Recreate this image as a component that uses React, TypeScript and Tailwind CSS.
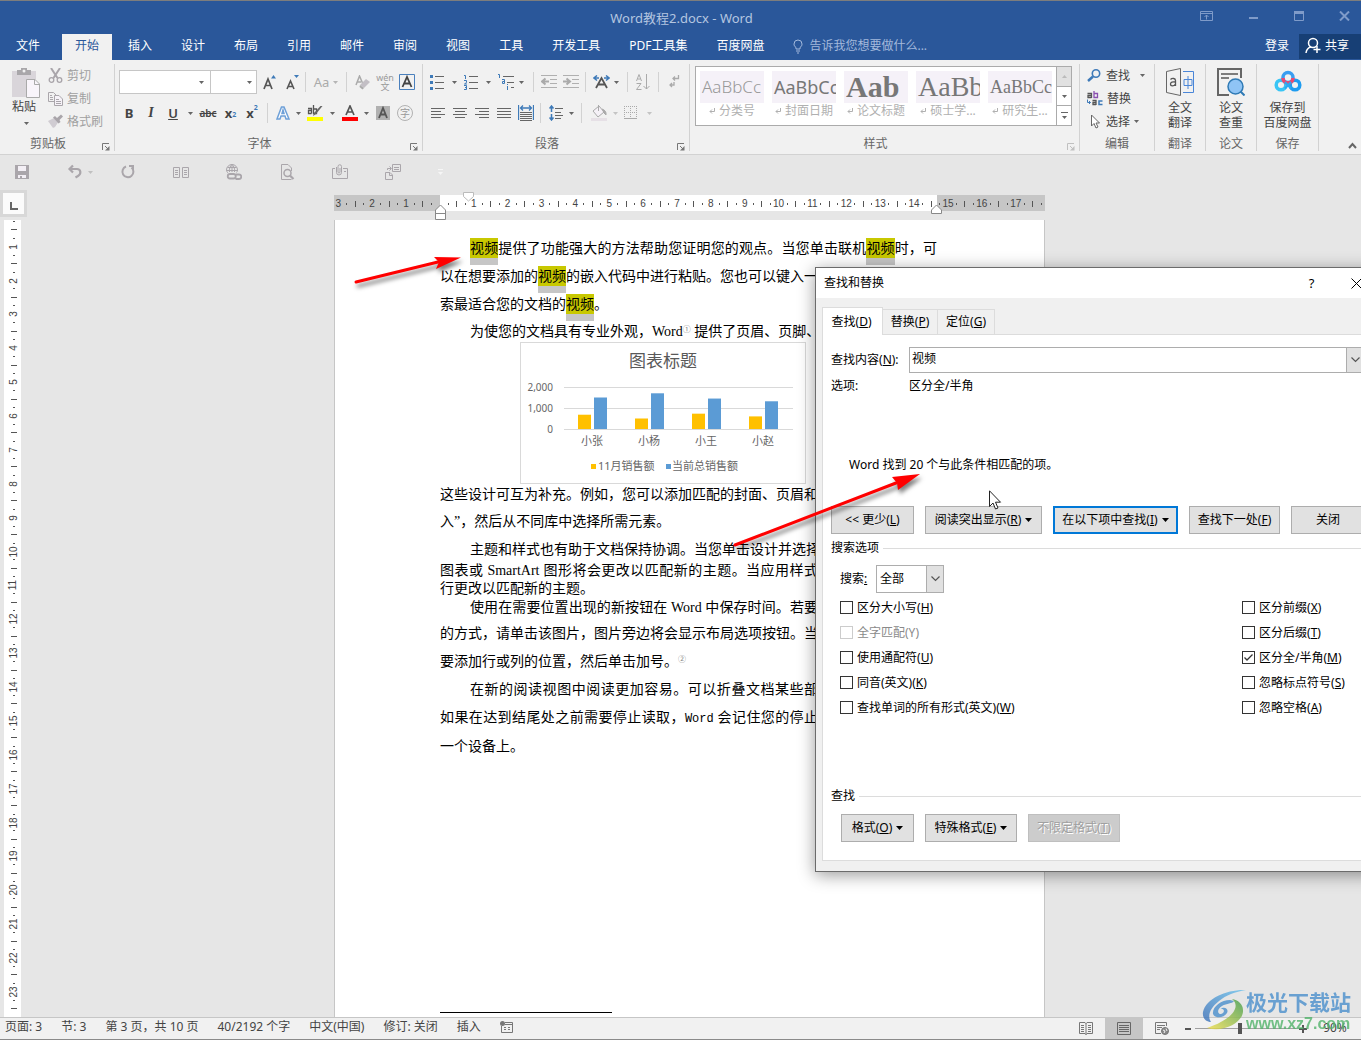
import type { ReactNode } from "react";

const UI_FONT = "font-['Noto_Sans','Noto_Sans_CJK_SC',sans-serif]";
const DOC_FONT = "font-['Liberation_Serif','Noto_Sans_CJK_SC',serif]";

interface ChildProps {
  children: ReactNode;
}

/* ---------- small building blocks ---------- */

function Svg({ w, h, children }: { w: number; h: number; children: ReactNode }) {
  return (
    <svg width={w} height={h} viewBox={`0 0 ${w} ${h}`} fill="none" className="block shrink-0">
      {children}
    </svg>
  );
}

function Caret({ color = "#666" }: { color?: string }) {
  return (
    <Svg w={5} h={3}>
      <path d="M0 0H5L2.500 3Z" fill={color} />
    </Svg>
  );
}

function Tool({ label, className, children }: { label: string; className: string; children: ReactNode }) {
  return (
    <button aria-label={label} className={`flex h-6 shrink-0 items-center justify-center ${className}`}>
      {children}
    </button>
  );
}

function Sep({ className = "" }: { className?: string }) {
  return <div className={`h-5 w-px shrink-0 bg-[#d2d2d2] ${className}`} />;
}

function Launcher({ color = "#777" }: { color?: string }) {
  return (
    <button aria-label="更多选项" className="absolute right-1 bottom-0">
      <Svg w={8} h={8}>
        <path d="M.5 7V.5H7M3 3L6 6" stroke={color} />
        <path d="M7.500 3V7.500H3Z" fill={color} />
      </Svg>
    </button>
  );
}

interface GroupProps {
  name: string;
  className: string;
  launcher?: string;
  children: ReactNode;
}

function Group({ name, className, launcher, children }: GroupProps) {
  return (
    <section className={`relative flex h-[87px] shrink-0 flex-col border-r border-[#d2d2d2] ${className}`}>
      <div className="flex-1">{children}</div>
      <div className={`text-center leading-[14px] text-[#666] ${launcher ? "pr-[18px]" : ""}`}>{name}</div>
      {launcher && <Launcher color={launcher} />}
    </section>
  );
}

/* ---------- title bar and tabs ---------- */

function TitleBar() {
  return (
    <header className="flex h-[34px] items-center border-t border-[#7d7d7d] bg-[#2a579a] pl-3">
      <div className="flex-1" />
      <h1 className="text-[13px] text-[#b4c6e0]">Word教程2.docx - Word</h1>
      <div className="flex flex-1 items-center justify-end gap-[33px] pr-2.5 pb-1">
        <button aria-label="功能区显示选项">
          <Svg w={13} h={10}>
            <path d="M.5 .5H12.500V9.500H.5ZM.5 2.500H12.500M6.500 8.500V4M4.500 6L6.500 4L8.500 6" stroke="#7f9bc9" />
          </Svg>
        </button>
        <button aria-label="最小化">
          <Svg w={13} h={10}>
            <path d="M3 7H12" stroke="#7f9bc9" strokeWidth="2" />
          </Svg>
        </button>
        <button aria-label="最大化">
          <Svg w={13} h={10}>
            <path d="M2.500 1V9.500H11.500V1" stroke="#7f9bc9" />
            <path d="M2 0H12V3H2Z" fill="#7f9bc9" />
          </Svg>
        </button>
        <button aria-label="关闭窗口">
          <Svg w={13} h={10}>
            <path d="M2 .5L11 9.500M11 .5L2 9.500" stroke="#7f9bc9" strokeWidth="2" />
          </Svg>
        </button>
      </div>
    </header>
  );
}

const TABS = ["开始", "插入", "设计", "布局", "引用", "邮件", "审阅", "视图", "工具", "开发工具", "PDF工具集", "百度网盘"];

function TabBar() {
  return (
    <nav className="flex h-[26px] items-stretch bg-[#2a579a] text-white">
      <button className="w-[62px] pr-1.5 pb-0.5">文件</button>
      <div className="flex gap-[3px]">
        {TABS.map((tab, i) => (
          <button key={tab} className={`px-[13px] pb-0.5 ${i === 0 ? "bg-[#f1f1f1] text-[#2a579a]" : ""}`}>
            {tab}
          </button>
        ))}
      </div>
      <button className="ml-4 flex items-center gap-1.5 pb-0.5 text-[#a3b9dc]">
        <Svg w={10} h={15}>
          <path d="M3 10V8.500C1.500 7.500 1 6.300 1 5A4 4 0 0 1 9 5C9 6.300 8.500 7.500 7 8.500V10ZM3 12H7M4 14H6" stroke="#a3b9dc" />
        </Svg>
        告诉我您想要做什么...
      </button>
      <button className="ml-auto px-2.5 pb-0.5">登录</button>
      <button className="mb-px flex w-[62px] items-center gap-1 bg-[#173f75] pb-0.5 pl-1.5">
        <Svg w={16} h={17}>
          <circle cx="8" cy="6" r="4.500" stroke="#fff" strokeWidth="1.500" />
          <path d="M1 16C1.500 12.500 3.500 10.500 6 10M8.500 12.500H15.500M12 9V16" stroke="#fff" strokeWidth="1.500" />
        </Svg>
        共享
      </button>
    </nav>
  );
}

/* ---------- ribbon ---------- */

function ClipboardGroup() {
  const item = "flex h-[23px] items-center gap-1 whitespace-nowrap text-[#a0a0a0]";
  return (
    <Group name="剪贴板" className="w-[115px]" launcher="#777">
      <div className="flex">
        <button className="flex w-[48px] shrink-0 flex-col items-center pt-1 text-[#444]">
          <span className="pl-1">
            <Svg w={30} h={30}>
              <path d="M1 3H25V29H1Z" fill="#d9d5da" />
              <path d="M6 2H10V0H16V2H20V7H6Z" fill="#a9a7aa" />
              <circle cx="13" cy="3" r="1.500" fill="#f1f1f1" />
              <path d="M15.500 11.500H24L28.500 16V29.500H15.500Z" fill="#f9f5fb" stroke="#aaa" />
              <path d="M23.500 11.500V16.500H28.500" stroke="#aaa" />
            </Svg>
          </span>
          <span className="leading-[18px]">粘贴</span>
          <span className="pt-1.5 pl-1">
            <Caret />
          </span>
        </button>
        <div>
          <button className={item}>
            <Svg w={15} h={15}>
              <path d="M3 0L9.500 10M12 0L5.500 10" stroke="#a9a5aa" strokeWidth="2" />
              <circle cx="3.500" cy="12" r="2.300" stroke="#a9a5aa" strokeWidth="1.300" />
              <circle cx="11.500" cy="12" r="2.300" stroke="#a9a5aa" strokeWidth="1.300" />
            </Svg>
            剪切
          </button>
          <button className={item}>
            <Svg w={15} h={15}>
              <path d="M.5 1.500H5.500L8.500 4.500V10.500H.5ZM2 4.500H4M2 6.500H5M2 8.500H5" stroke="#aaa6ab" />
              <path d="M6.500 4.500H11L14.500 8V14.500H6.500Z" fill="#f6f2f8" stroke="#aaa6ab" />
              <path d="M8 8.500H11M8 10.500H13M8 12.500H13" stroke="#aaa6ab" />
            </Svg>
            复制
          </button>
          <button className={item}>
            <Svg w={15} h={15}>
              <path d="M0 7L6 4L10 8.500L7 13L5 14Z" fill="#d0ccd2" />
              <path d="M5 3.500L7 2L9 4L13 .5L15 2.500L11.500 6L12.500 8L10.500 9.500Z" fill="#a9a5aa" />
            </Svg>
            格式刷
          </button>
        </div>
      </div>
    </Group>
  );
}

function FontGroup() {
  return (
    <Group name="字体" className="w-[308px]" launcher="#777">
      <div className="flex h-[36px] items-center pl-1">
        <div className="flex h-6 w-[92px] items-center border border-[#c6c6c6] bg-white pr-1.5">
          <input aria-label="字体名称" className="w-full min-w-0 flex-1 outline-none" />
          <Caret />
        </div>
        <div className="-ml-px flex h-6 w-[47px] items-center border border-[#c6c6c6] bg-white pr-1">
          <input aria-label="字号" className="w-full min-w-0 flex-1 outline-none" />
          <Caret />
        </div>
        <Tool label="增大字号" className="w-[24px]">
          <Svg w={13} h={15}>
            <path d="M1 14L5 4L9 14M2.500 10.500H7.500" stroke="#555" strokeWidth="1.700" />
            <path d="M8 3.500L10.500 0L13 3.500Z" fill="#3e7ab8" />
          </Svg>
        </Tool>
        <Tool label="减小字号" className="w-[22px]">
          <Svg w={13} h={15}>
            <path d="M1 14L4.500 6L8 14M2.500 11.500H6.500" stroke="#555" strokeWidth="1.600" />
            <path d="M8 0H13L10.500 3Z" fill="#3e7ab8" />
          </Svg>
        </Tool>
        <Sep className="ml-[2px]" />
        <Tool label="更改大小写" className="w-[40px] gap-1">
          <span className="text-[13px] text-[#aaa]">Aa</span>
          <Caret color="#b5b5b5" />
        </Tool>
        <Sep />
        <Tool label="清除格式" className="ml-1 w-[22px]">
          <Svg w={15} h={15}>
            <path d="M1 10L4.500 1L7.500 8M2 7H6" stroke="#aaa" strokeWidth="1.500" />
            <path d="M5 10L11 4L15 7L9 13Z" fill="#c3bfc5" />
            <path d="M5 10L9 13L7.500 14.500L4.500 12Z" fill="#aaa" />
          </Svg>
        </Tool>
        <Tool label="拼音指南" className="w-[24px] flex-col text-[#999]">
          <span className="text-[9px] leading-[9px]">wén</span>
          <span className="text-[9px] leading-[9px]">文</span>
        </Tool>
        <Tool label="字符边框" className="w-[20px]">
          <Svg w={16} h={16}>
            <path d="M.5 .5H15.500V15.500H.5Z" stroke="#4a80bd" />
            <path d="M3.500 13L8 3L12.500 13M5 9.500H11" stroke="#444" strokeWidth="1.800" />
          </Svg>
        </Tool>
      </div>
      <div className="flex h-[26px] items-center pl-[3px] text-[#444]">
        <Tool label="加粗" className="w-[22px] text-[13px] font-bold">
          B
        </Tool>
        <Tool label="倾斜" className="w-[22px] text-[14px] font-bold italic">
          <span className="font-['Liberation_Serif']">I</span>
        </Tool>
        <Tool label="下划线" className="w-[22px] text-[13px] font-semibold">
          <span className="underline">U</span>
        </Tool>
        <Tool label="下划线样式" className="w-[12px]">
          <Caret />
        </Tool>
        <Tool label="删除线" className="w-[24px] text-[10px] font-semibold">
          <span className="line-through">abc</span>
        </Tool>
        <Tool label="下标" className="w-[21px] text-[13px] font-bold">
          x<sub className="text-[7px] text-[#3e7ab8]">2</sub>
        </Tool>
        <Tool label="上标" className="w-[22px] text-[13px] font-bold">
          x<sup className="pb-1 text-[7px] text-[#3e7ab8]">2</sup>
        </Tool>
        <Sep className="ml-1" />
        <Tool label="文本效果" className="ml-1 w-[32px] gap-[6px]">
          <Svg w={14} h={14}>
            <path d="M1 13L5.500 1H8L13 13H10L9 10H5L4 13ZM6 7.500H8L7 4Z" fill="#fff" stroke="#6ea0d8" strokeWidth="1.500" />
          </Svg>
          <Caret />
        </Tool>
        <Tool label="突出显示颜色" className="w-[34px] gap-[6px]">
          <Svg w={17} h={16}>
            <path d="M1 3.500H4.500V8.500M4.500 5.500H1.500V8.500H4.500M6.500 0V8.500H9.500V4H6.500" stroke="#555" strokeWidth="1.300" />
            <path d="M15.500 1L9 9L6 11L7 8L13.500 1Z" fill="#666" />
            <path d="M0 12H16V16H0Z" fill="#ff0" />
          </Svg>
          <Caret />
        </Tool>
        <Tool label="字体颜色" className="w-[34px] gap-[6px]">
          <Svg w={16} h={16}>
            <path d="M4 10L8 1L12 10M5.500 7H10.500" stroke="#555" strokeWidth="1.700" />
            <path d="M0 12H16V16H0Z" fill="red" />
          </Svg>
          <Caret />
        </Tool>
        <Tool label="字符底纹" className="w-[22px]">
          <Svg w={14} h={14}>
            <path d="M0 0H14V14H0Z" fill="#b1b1b1" />
            <path d="M3 12L7 2L11 12M4.500 8.500H9.500" stroke="#555" strokeWidth="1.800" />
          </Svg>
        </Tool>
        <Tool label="带圈字符" className="w-[22px]">
          <span className="flex size-4 items-center justify-center rounded-full border border-[#b1b1b1] text-[10px] leading-none text-[#999]">
            字
          </span>
        </Tool>
      </div>
    </Group>
  );
}

function ParagraphGroup() {
  return (
    <Group name="段落" className="w-[267px]" launcher="#777">
      <div className="flex h-[36px] items-center pl-[7px]">
        <Tool label="项目符号" className="w-[34px] justify-start gap-2">
          <Svg w={14} h={15}>
            <path d="M5 1.500H14M5 7.500H14M5 13.500H14" stroke="#666" />
            <path d="M0 0H3V3H0ZM0 6H3V9H0ZM0 12H3V15H0Z" fill="#3e7ab8" />
          </Svg>
          <Caret />
        </Tool>
        <Tool label="编号" className="w-[34px] justify-start gap-2">
          <Svg w={14} h={16}>
            <path d="M5 2.500H14M5 8.500H14M5 14.500H14" stroke="#666" />
            <path d="M0 1.500H1.500V5M0 6.500H2.500V8.500L.5 10H3M0 11.500H2.500V15.500H0M1 13.500H2.500" stroke="#3e7ab8" />
          </Svg>
          <Caret />
        </Tool>
        <Tool label="多级列表" className="w-[32px] justify-start gap-[4px]">
          <Svg w={17} h={16}>
            <path d="M5 2.500H16M9 8.500H16M13 13.500H16" stroke="#666" />
            <path d="M0 .5H1.500V4M4 5.500H6.500V9.500H4.500V7.500H6.500M9.500 10V11M9.500 12V16" stroke="#3e7ab8" />
          </Svg>
          <Caret />
        </Tool>
        <Sep className="ml-[3px]" />
        <Tool label="减少缩进量" className="ml-1 w-[22px]">
          <Svg w={16} h={14}>
            <path d="M0 .5H16M9 4.500H16M9 8.500H16M0 12.500H16" stroke="#b0b0b0" />
            <path d="M8 6.500H2M4.500 3.500L1 6.500L4.500 9.500" stroke="#aaa" strokeWidth="2" />
          </Svg>
        </Tool>
        <Tool label="增加缩进量" className="w-[22px]">
          <Svg w={16} h={14}>
            <path d="M0 .5H16M9 4.500H16M9 8.500H16M0 12.500H16" stroke="#b0b0b0" />
            <path d="M0 6.500H6M3.500 3.500L7 6.500L3.500 9.500" stroke="#aaa" strokeWidth="2" />
          </Svg>
        </Tool>
        <Sep className="ml-[3px]" />
        <Tool label="中文版式" className="ml-[3px] w-[34px] gap-1">
          <Svg w={17} h={14}>
            <path d="M3 13L8.500 3L14 13M5 9.500H12" stroke="#555" strokeWidth="1.800" />
            <path d="M6 3H1.500M4 .5L1 3L4 5.500M11 3H15.500M13 .5L16 3L13 5.500" stroke="#3e7ab8" strokeWidth="1.500" />
          </Svg>
          <Caret />
        </Tool>
        <Sep className="ml-1" />
        <Tool label="排序" className="w-[30px]">
          <Svg w={14} h={16}>
            <path d="M.5 7L3 .5L5.500 7M1.500 5H4.500M.5 9.500H5L.5 15.500H5.500M10.500 0V15M7.500 12L10.500 15L13.500 12" stroke="#aaa" />
          </Svg>
        </Tool>
        <Sep />
        <Tool label="显示编辑标记" className="w-[30px]">
          <Svg w={11} h={14}>
            <path d="M9.500 0V3.500H4M6 1.500L4 3.500L6 5.500M5 7V10H1M3 8L1 10L3 12" stroke="#aaa" strokeWidth="1.300" />
          </Svg>
        </Tool>
      </div>
      <div className="flex h-[26px] items-center pl-1">
        {[
          ["左对齐", "M0 .5H14M0 3.500H10M0 6.500H14M0 9.500H10"],
          ["居中", "M0 .5H14M2 3.500H12M0 6.500H14M2 9.500H12"],
          ["右对齐", "M0 .5H14M4 3.500H14M0 6.500H14M4 9.500H14"],
          ["两端对齐", "M0 .5H14M0 3.500H14M0 6.500H14M0 9.500H14"],
        ].map(([label, d]) => (
          <Tool key={label} label={label} className="w-[22px]">
            <Svg w={14} h={10}>
              <path d={d} stroke="#666" />
            </Svg>
          </Tool>
        ))}
        <Tool label="分散对齐" className="w-[22px]">
          <Svg w={16} h={16}>
            <path d="M.5 0V15M15.500 0V15M3 3H13M5 .5L2.500 3L5 5.500M11 .5L13.500 3L11 5.500" stroke="#3e7ab8" strokeWidth="1.300" />
            <path d="M2 7.500H14M2 9.500H14M2 11.500H14M2 13.500H14M2 15.500H14" stroke="#666" />
          </Svg>
        </Tool>
        <Sep className="ml-[3px]" />
        <Tool label="行距" className="ml-[3px] w-[34px] gap-[6px]">
          <Svg w={14} h={16}>
            <path d="M2.500 1V7M.5 3.500L2.500 1L4.500 3.500M2.500 9V15M.5 12.500L2.500 15L4.500 12.500" stroke="#3e7ab8" strokeWidth="1.500" />
            <path d="M6 3.500H14M6 7.500H12M6 10.500H14M6 13.500H12" stroke="#666" />
          </Svg>
          <Caret />
        </Tool>
        <Sep className="ml-[3px]" />
        <Tool label="底纹" className="ml-1 w-[36px] gap-[6px]">
          <Svg w={16} h={16}>
            <path d="M2 6L8 1L13 7L7 12Z" fill="#f5f1f7" stroke="#aaa" />
            <path d="M7.500 6V0M11 4C14 5 15.500 7 15 10L12 7" stroke="#aaa" fill="#aaa" />
            <path d="M0 13H16V16H0Z" fill="#e6e0e6" />
          </Svg>
          <Caret color="#c4c4c4" />
        </Tool>
        <Tool label="边框" className="w-[32px] gap-[10px]">
          <Svg w={13} h={14}>
            <path d="M.5 0V12M12.500 0V12M0 .5H13M6.500 0V12M0 6.500H13" stroke="#aaa" strokeDasharray="1 1" />
            <path d="M0 12.500H13" stroke="#aaa" />
          </Svg>
          <Caret color="#c4c4c4" />
        </Tool>
      </div>
    </Group>
  );
}

const STYLES = [
  { name: "分类号", sample: "AaBbCc", cls: "text-[17px] font-light text-[#999]" },
  { name: "封面日期", sample: "AaBbCc", cls: "text-[18px] text-[#777]" },
  { name: "论文标题", sample: "Aab", cls: "text-[30px] font-bold font-['Liberation_Serif'] text-[#777]" },
  { name: "硕士学...", sample: "AaBb", cls: "text-[28px] font-['Liberation_Serif'] text-[#777]" },
  { name: "研究生...", sample: "AaBbCc", cls: "text-[18px] font-['Liberation_Serif'] text-[#777]" },
];

function StylesGroup() {
  return (
    <Group name="样式" className="w-[390px]" launcher="#c0c0c0">
      <div className="mt-0.5 ml-[5px] flex h-[60px] w-[377px] border border-[#ababab] bg-white">
        <div className="flex flex-1 gap-2 pt-1 pl-1">
          {STYLES.map((s) => (
            <button key={s.name} className="flex w-16 flex-col items-center">
              <span className={`h-8 w-full overflow-hidden bg-[#f5f1f8] px-0.5 text-left leading-8 ${s.cls}`}>
                {s.sample}
              </span>
              <span className="flex items-center gap-1 leading-4 whitespace-nowrap text-[#b0b0b0]">
                <Svg w={6} h={6}>
                  <path d="M5.500 0V3.500H1M3 1.500L1 3.500L3 5.500" stroke="#b0b0b0" />
                </Svg>
                {s.name}
              </span>
            </button>
          ))}
        </div>
        <div className="flex w-[15px] flex-col border-l border-[#ababab]">
          <button aria-label="上一行" className="flex flex-1 items-center justify-center bg-[#e1e1e1]">
            <Svg w={5} h={3}>
              <path d="M0 3H5L2.500 0Z" fill="#bbb" />
            </Svg>
          </button>
          <button aria-label="下一行" className="flex flex-1 items-center justify-center border-y border-[#ababab]">
            <Caret />
          </button>
          <button aria-label="其他" className="flex flex-1 items-center justify-center">
            <Svg w={7} h={7}>
              <path d="M0 .5H7" stroke="#666" />
              <path d="M1 4H6L3.500 7Z" fill="#666" />
            </Svg>
          </button>
        </div>
      </div>
    </Group>
  );
}

function EditGroup() {
  const item = "flex h-[23px] items-center gap-1 text-[#444]";
  return (
    <Group name="编辑" className="w-[75px]">
      <div className="pl-[7px]">
        <button className={item}>
          <Svg w={15} h={13}>
            <circle cx="9" cy="4.500" r="3.700" stroke="#3e7ab8" strokeWidth="1.600" />
            <path d="M6 7.500L1 12" stroke="#3e7ab8" strokeWidth="2.500" />
          </Svg>
          查找
          <span className="pl-1.5">
            <Caret />
          </span>
        </button>
        <button className={item}>
          <Svg w={16} h={16}>
            <path d="M.5 2.500H4.500V7M4.500 4.500H1V6.500H4.500M5.500 9.500H9V14M9 11.500H6V13.500H9" stroke="#555" strokeWidth="1.300" />
            <path d="M7 0V6.500H10.500V2.500H7" stroke="#8a4fb0" strokeWidth="1.300" />
            <path d="M15.500 10H12V13.500H15.500" stroke="#3e7ab8" strokeWidth="1.500" />
            <path d="M.5 8.500V11.500H3.500M2 10L3.500 11.500L2 13" stroke="#3e7ab8" />
          </Svg>
          替换
        </button>
        <button className={item}>
          <Svg w={15} h={15}>
            <path d="M4.500 1V12L7 9.500L9 14L11 13L9 9H12.500Z" fill="#fff" stroke="#666" />
          </Svg>
          选择
          <Caret />
        </button>
      </div>
    </Group>
  );
}

function BigButton({ icon, lines }: { icon: ReactNode; lines: string[] }) {
  return (
    <button className="flex w-full flex-col items-center pt-1 leading-[15px] text-[#444]">
      {icon}
      <span className="pt-1">{lines[0]}</span>
      <span>{lines[1]}</span>
    </button>
  );
}

function AddinGroups() {
  return (
    <>
      <Group name="翻译" className="w-[51px]">
        <BigButton
          lines={["全文", "翻译"]}
          icon={
            <Svg w={28} h={28}>
              <path d="M.5 3.500L14.500 .5V27.500L.5 24.500Z" stroke="#666" />
              <path d="M4.500 11.500C6 10 9.500 10 9.500 12.500V18M9.500 14C6.500 13.500 4.500 14 4.500 16C4.500 18.500 8 18.500 9.500 16" stroke="#555" strokeWidth="1.300" />
              <path d="M17 3.500H27.500V24.500H17" stroke="#4a86d8" />
              <path d="M18 11.500H26V17.500H18ZM22 8V21" stroke="#4a86d8" />
            </Svg>
          }
        />
      </Group>
      <Group name="论文" className="w-[51px]">
        <BigButton
          lines={["论文", "查重"]}
          icon={
            <Svg w={28} h={28}>
              <path d="M24 10V1H1V27H12" stroke="#666" strokeWidth="2" />
              <path d="M4 6H21M4 10H12" stroke="#555" strokeWidth="1.500" />
              <circle cx="18.500" cy="18.500" r="7.500" fill="#8fc4f5" stroke="#2f7ab5" strokeWidth="1.500" />
              <path d="M23.500 23.500L27.500 27.500" stroke="#2f7ab5" strokeWidth="2" />
            </Svg>
          }
        />
      </Group>
      <Group name="保存" className="w-[62px]">
        <BigButton
          lines={["保存到", "百度网盘"]}
          icon={
            <Svg w={28} h={28}>
              <circle cx="7" cy="17" r="4.800" stroke="#39c5f5" strokeWidth="3.500" />
              <circle cx="21" cy="17" r="4.800" stroke="#1e9cf0" strokeWidth="3.500" />
              <circle cx="14" cy="9.500" r="5" stroke="#3a9df0" strokeWidth="3.500" />
              <path d="M9 10A5 5 0 0 0 19 10" stroke="#f0486e" strokeWidth="3.500" />
              <path d="M11 14L17 20.500M17 14L11 20.500" stroke="#2aa9f2" strokeWidth="2" />
            </Svg>
          }
        />
      </Group>
    </>
  );
}

function Ribbon() {
  return (
    <div className="flex h-[95px] items-start border-b border-[#d2d2d2] bg-[#f1f1f1] pt-1">
      <ClipboardGroup />
      <FontGroup />
      <ParagraphGroup />
      <StylesGroup />
      <EditGroup />
      <AddinGroups />
      <button aria-label="折叠功能区" className="mt-[78px] mr-1 ml-auto">
        <Svg w={9} h={7}>
          <path d="M1 6L4.500 2L8 6" stroke="#666" strokeWidth="2" />
        </Svg>
      </button>
    </div>
  );
}

const QUICK_ICONS: { label: string; art: ReactNode }[] = [
  {
    label: "保存",
    art: (
      <>
        <path d="M1 1H15V15H1Z" fill="#aaa6ab" />
        <path d="M4 2H12V7H4ZM4 11H12V14H8V12H6V14H4Z" fill="#f3eff5" />
      </>
    ),
  },
  {
    label: "撤消",
    art: <path d="M6 1.500L2.500 5L6 8.500M3 5H10C14 5 14.500 10 11 12L8.500 13.500" stroke="#aaa6ab" strokeWidth="2.200" />,
  },
  {
    label: "恢复",
    art: (
      <>
        <path d="M6 2.500A5.500 5.500 0 1 0 11.500 3.500" stroke="#aaa6ab" strokeWidth="2" />
        <path d="M9 1H14V6H12V3H9Z" fill="#aaa6ab" />
      </>
    ),
  },
  {
    label: "双页",
    art: <path d="M.5 3.500H6.500V13.500H.5ZM9.500 3.500H15.500V13.500H9.500ZM2 6.500H5M2 8.500H5M2 10.500H5M11 6.500H14M11 8.500H14M11 10.500H14" stroke="#aaa6ab" />,
  },
  {
    label: "超链接",
    art: (
      <>
        <path d="M.5 6A5.500 5.500 0 0 1 11.500 6C11.500 7 11 8 10.500 8.500M.5 6.500H11.500M1.500 3.500H10.500M6 .5V8M3.500 8C3 5 4 2 6 .5M8.500 8C9 5 8 2 6 .5M.5 6C.5 7 1 8 2 9" stroke="#aaa6ab" />
        <path d="M4 10H7.500A2.200 2.200 0 0 1 7.500 14.500H4A2.200 2.200 0 0 1 4 10ZM10 10.500H13A2.200 2.200 0 0 1 13 15H9.500" stroke="#aaa6ab" strokeWidth="1.800" />
      </>
    ),
  },
  {
    label: "打印预览",
    art: (
      <>
        <path d="M12.500 15.500H2.500V.5H9L12.500 4V7" stroke="#aaa6ab" />
        <circle cx="8.500" cy="9" r="3.500" stroke="#aaa6ab" strokeWidth="1.500" />
        <path d="M11 11.500L14.500 15" stroke="#aaa6ab" strokeWidth="2.200" />
      </>
    ),
  },
  {
    label: "附件",
    art: <path d="M3 4.500H.5V14.500H15.500V4.500H11M12 7.500H14M4.500 3V8.500A2.500 2.500 0 0 0 9.500 8.500V2.500A1.700 1.700 0 0 0 6 2.500V8A1 1 0 0 0 8 8V4" stroke="#aaa6ab" />,
  },
  {
    label: "切换窗口",
    art: <path d="M7.500 .5H15.500V7.500H7.500ZM9 3.500H14M9 5.500H14M.5 8.500H5L7.500 11V15.500H.5ZM2.500 6V4.500H6M4.500 2.500L6.500 4.500L4.500 6.500M4.500 9V11.500H7" stroke="#aaa6ab" />,
  },
];

function QuickAccess() {
  return (
    <div className="flex h-[35px] items-center gap-[37px] bg-[#e6e6e6] pb-0.5 pl-3.5">
      {QUICK_ICONS.map((icon) => (
        <button key={icon.label} aria-label={icon.label} className="relative">
          <Svg w={16} h={16}>{icon.art}</Svg>
          {icon.label === "撤消" && (
            <span className="absolute top-[7px] left-[21px]">
              <Caret color="#c0c0c0" />
            </span>
          )}
        </button>
      ))}
      <button aria-label="自定义快速访问工具栏">
        <Svg w={5} h={6}>
          <path d="M0 .5H5" stroke="#f6f6f6" />
          <path d="M0 3H5L2.500 6Z" fill="#f6f6f6" />
        </Svg>
      </button>
    </div>
  );
}

/* ---------- rulers ---------- */

function Tick({ index, offset, vertical }: { index: number; offset: number; vertical?: boolean }) {
  const pos = index + offset;
  const unit = Math.abs(pos) / 4;
  if (pos === 0) return <span className="flex-1 basis-0" />;
  let mark: ReactNode;
  if (pos % 4 === 0) mark = <span className={vertical ? "-rotate-90" : ""}>{unit}</span>;
  else if (pos % 2 === 0) mark = <span className={`bg-[#555] ${vertical ? "h-px w-1.5" : "h-1.5 w-px"}`} />;
  else mark = <span className={`bg-[#555] ${vertical ? "h-px w-0.5" : "h-0.5 w-px"}`} />;
  return <span className="flex min-h-0 min-w-0 flex-1 basis-0 items-center justify-center">{mark}</span>;
}

const RULER_TEXT = "font-['Liberation_Sans'] text-[10px] leading-none text-[#444]";

function HorizontalRuler() {
  return (
    <div className="relative flex h-4 w-[711px]">
      <div className="w-[106px] bg-[#c6c6c6]" />
      <div className="flex-1 bg-white" />
      <div className="w-[108px] bg-[#c6c6c6]" />
      <div className={`absolute inset-0 flex pt-px ${RULER_TEXT}`}>
        {Array.from({ length: 84 }, (_, i) => (
          <Tick key={i} index={i} offset={-12} />
        ))}
      </div>
      <div className="absolute top-[9px] left-[101px]">
        <Svg w={11} h={16}>
          <path d="M.5 15.500V6L5.500 1L10.500 6V15.500ZM.5 9.500H10.500" fill="#fff" stroke="#888" />
        </Svg>
      </div>
      <div className="absolute -top-[3px] left-[129px]">
        <Svg w={11} h={10}>
          <path d="M.5 .5H10.500V4.500L5.500 9L.5 4.500Z" fill="#fff" stroke="#bbb" />
        </Svg>
      </div>
      <div className="absolute top-[9px] left-[597px]">
        <Svg w={11} h={10}>
          <path d="M.5 9.500V6L5.500 1L10.500 6V9.500Z" fill="#fff" stroke="#888" />
        </Svg>
      </div>
    </div>
  );
}

function VerticalRuler() {
  return (
    <div className="mt-[3px] ml-1 min-h-0 flex-1 overflow-hidden">
      <div className="h-full w-[17px] overflow-hidden bg-white">
        <div className={`-mt-[3px] flex h-[804px] flex-col pl-0.5 ${RULER_TEXT}`}>
          {Array.from({ length: 95 }, (_, i) => (
            <Tick key={i} index={i} offset={1} vertical />
          ))}
        </div>
      </div>
    </div>
  );
}

/* ---------- document ---------- */

function Hit() {
  return <mark className="bg-[linear-gradient(#c8c800_20px,#c6c6c6_20px)] pt-[3px] pb-[9px] text-black">视频</mark>;
}

// A line that fills its box, as justified body text does
function Full({ children, className = "w-[378px] leading-7" }: ChildProps & { className?: string }) {
  return <div className={`whitespace-nowrap [text-align-last:justify] ${className}`}>{children}</div>;
}

const CHART_DATA = [
  { name: "小张", month: 680, total: 1500 },
  { name: "小杨", month: 500, total: 1700 },
  { name: "小王", month: 730, total: 1450 },
  { name: "小赵", month: 600, total: 1320 },
];

function SalesChart() {
  return (
    <svg width="286" height="142" viewBox="0 0 286 142" className={`ml-20 block ${UI_FONT}`} fill="#666">
      <rect x=".5" y=".5" width="285" height="141" fill="#fff" stroke="#d9d9d9" />
      <text x="143" y="25" fontSize="17" textAnchor="middle" fill="#595959">图表标题</text>
      {[2000, 1000, 0].map((value, i) => (
        <g key={value}>
          <path d={`M44 ${45.5 + i * 21}H273`} stroke="#d9d9d9" />
          <text x="33" y={49 + i * 21} fontSize="10" textAnchor="end">
            {value.toLocaleString("en-US")}
          </text>
        </g>
      ))}
      {CHART_DATA.map((d, i) => (
        <g key={d.name}>
          <rect x={58 + i * 57} y={87 - d.month * 0.021} width="13" height={d.month * 0.021} fill="#ffc000" />
          <rect x={74 + i * 57} y={87 - d.total * 0.021} width="13" height={d.total * 0.021} fill="#5b9bd5" />
          <text x={72 + i * 57} y="103" fontSize="11" textAnchor="middle">{d.name}</text>
        </g>
      ))}
      <rect x="71" y="122" width="5" height="5" fill="#ffc000" />
      <text x="78" y="128" fontSize="11">11月销售额</text>
      <rect x="146" y="122" width="5" height="5" fill="#5b9bd5" />
      <text x="152" y="128" fontSize="11">当前总销售额</text>
    </svg>
  );
}

function Page() {
  return (
    <article
      className={`flex w-[711px] flex-1 flex-col border-x border-[#c6c6c6] bg-white pt-[15px] pr-[107px] pb-1 pl-[105px] text-[14px] text-black ${DOC_FONT}`}
    >
      <Full className="pl-[30px] leading-7">
        <Hit />提供了功能强大的方法帮助您证明您的观点。当您单击联机<Hit />时，可
      </Full>
      <Full>
        以在想要添加的<Hit />的嵌入代码中进行粘贴。您也可以键入一
      </Full>
      <div className="leading-7">
        索最适合您的文档的<Hit />。
      </div>
      <Full className="w-[378px] pt-0.5 pl-[30px] leading-[21px]">
        为使您的文档具有专业外观，Word<sup className="text-[8px] leading-none text-[#888]">①</sup> 提供了页眉、页脚、
      </Full>
      <SalesChart />
      <Full className="w-[378px] leading-[22px]">这些设计可互为补充。例如，您可以添加匹配的封面、页眉和</Full>
      <div className="leading-8">入”，然后从不同库中选择所需元素。</div>
      <Full className="w-[378px] pl-[30px] leading-6">主题和样式也有助于文档保持协调。当您单击设计并选择</Full>
      <Full className="w-[378px] leading-[18px]">图表或 SmartArt 图形将会更改以匹配新的主题。当应用样式</Full>
      <div className="leading-[18px]">行更改以匹配新的主题。</div>
      <Full className="w-[378px] pb-0.5 pl-[30px] leading-5">使用在需要位置出现的新按钮在 Word 中保存时间。若要</Full>
      <Full>的方式，请单击该图片，图片旁边将会显示布局选项按钮。当</Full>
      <div className="leading-7">
        要添加行或列的位置，然后单击加号。<sup className="text-[8px] leading-none text-[#888]">②</sup>
      </div>
      <Full className="w-[378px] pl-[30px] leading-7">在新的阅读视图中阅读更加容易。可以折叠文档某些部</Full>
      <Full>
        如果在达到结尾处之前需要停止读取，<span className="font-['Liberation_Mono'] text-[12px]">Word</span> 会记住您的停止
      </Full>
      <div className="leading-7">一个设备上。</div>
      <hr className="mt-auto w-[172px] border-black" />
    </article>
  );
}

function Workspace() {
  return (
    <main className="flex min-h-0 flex-1 bg-[#e6e6e6]">
      <div className="flex w-[27px] shrink-0 flex-col">
        <button aria-label="制表符" className="flex size-[27px] items-center justify-center border-[3px] border-[#d8d8d8] bg-[#fbfbfb] pt-1">
          <Svg w={8} h={8}>
            <path d="M1 0V7H8" stroke="#666" strokeWidth="2" />
          </Svg>
        </button>
        <VerticalRuler />
      </div>
      <div className="flex min-w-0 flex-1 flex-col items-center gap-[9px] pt-[5px] pr-[9px]">
        <HorizontalRuler />
        <Page />
      </div>
    </main>
  );
}

/* ---------- find and replace dialog ---------- */

// Caption with its access key underlined in brackets
function Key({ text, k }: { text: string; k: string }) {
  return (
    <span>
      {text}(<u>{k}</u>)
    </span>
  );
}

function DialogButton({ className, menu, children }: ChildProps & { className: string; menu?: boolean }) {
  return (
    <button className={`flex h-7 shrink-0 items-center justify-center gap-1 bg-[#e1e1e1] ${className}`}>
      {children}
      {menu && (
        <Svg w={7} h={4}>
          <path d="M0 0H7L3.500 4Z" fill="#000" />
        </Svg>
      )}
    </button>
  );
}

interface OptionProps {
  text: string;
  k: string;
  checked?: boolean;
  disabled?: boolean;
}

function Option({ text, k, checked, disabled }: OptionProps) {
  return (
    <label className={`flex h-[25px] items-center gap-1 ${disabled ? "text-[#8a8a8a]" : ""}`}>
      <span className="grid size-[13px]">
        <input
          type="checkbox"
          defaultChecked={checked}
          disabled={disabled}
          className="peer col-start-1 row-start-1 size-[13px] appearance-none border border-[#333] bg-white disabled:border-[#ccc]"
        />
        <svg viewBox="0 0 13 13" fill="none" className="pointer-events-none invisible col-start-1 row-start-1 size-[13px] peer-checked:visible">
          <path d="M2.500 6.500L5 9L10.500 3.500" stroke="#333" strokeWidth="1.300" />
        </svg>
      </span>
      {disabled ? `${text}(${k})` : <Key text={text} k={k} />}
    </label>
  );
}

const LEFT_OPTIONS: OptionProps[] = [
  { text: "区分大小写", k: "H" },
  { text: "全字匹配", k: "Y", disabled: true },
  { text: "使用通配符", k: "U" },
  { text: "同音(英文)", k: "K" },
  { text: "查找单词的所有形式(英文)", k: "W" },
];

const RIGHT_OPTIONS: OptionProps[] = [
  { text: "区分前缀", k: "X" },
  { text: "区分后缀", k: "T" },
  { text: "区分全/半角", k: "M", checked: true },
  { text: "忽略标点符号", k: "S" },
  { text: "忽略空格", k: "A" },
];

function SectionTitle({ children }: ChildProps) {
  return (
    <div className="flex h-4 items-center gap-1 leading-4">
      {children}
      <span className="h-px flex-1 bg-[#dcdcdc]" />
    </div>
  );
}

function Chevron() {
  return (
    <Svg w={9} h={6}>
      <path d="M.5 .5L4.500 4.500L8.500 .5" stroke="#555" strokeWidth="1.200" />
    </Svg>
  );
}

function FindDialog() {
  return (
    <section
      role="dialog"
      aria-label="查找和替换"
      className="absolute top-[267px] left-[815px] flex w-[565px] flex-col border border-[#6b6b6b] bg-[#f0f0f0] text-black shadow-[0_3px_16px_rgba(0,0,0,0.4)]"
    >
      <div className="flex h-[30px] items-center bg-white pl-2">
        <h2 className="flex-1">查找和替换</h2>
        <button className="w-[45px] text-[13px]">?</button>
        <button aria-label="关闭" className="flex w-[45px] justify-center">
          <Svg w={11} h={11}>
            <path d="M.5 .5L10.500 10.500M10.500 .5L.5 10.500" stroke="#000" />
          </Svg>
        </button>
      </div>
      <div className="flex items-end pt-[9px] pl-1.5">
        <button className="z-10 -mb-px h-7 w-[61px] border border-b-0 border-[#dcdcdc] bg-white pr-0.5">
          <Key text="查找" k="D" />
        </button>
        <button className="-ml-px h-[25px] w-[56px] border border-b-0 border-[#dcdcdc]">
          <Key text="替换" k="P" />
        </button>
        <button className="-ml-px h-[25px] w-[58px] border border-b-0 border-[#dcdcdc]">
          <Key text="定位" k="G" />
        </button>
      </div>
      <div className="mr-2 mb-2.5 ml-1.5 border border-[#dcdcdc] bg-white pt-3 pb-[18px] pl-2">
        <div className="flex items-center">
          <label htmlFor="find-what" className="w-[78px]">
            <Key text="查找内容" k="N" />:
          </label>
          <div className="mr-1.5 flex h-[26px] flex-1 border border-[#adadad]">
            <input id="find-what" defaultValue="视频" className="min-w-0 flex-1 pb-0.5 pl-0.5 outline-none" />
            <button aria-label="历史记录" className="flex w-[17px] items-center justify-center border-l border-[#adadad] bg-[#e1e1e1]">
              <Chevron />
            </button>
          </div>
        </div>
        <div className="flex h-[26px] items-center">
          <span className="w-[78px]">选项:</span>
          区分全/半角
        </div>
        <p className="pt-14 pb-[31px] pl-[18px] leading-5">Word 找到 20 个与此条件相匹配的项。</p>
        <div className="flex gap-[11px]">
          <DialogButton className="w-[83px] border border-[#adadad]">
            <Key text="<< 更少" k="L" />
          </DialogButton>
          <DialogButton className="w-[117px] border border-[#adadad]" menu>
            <Key text="阅读突出显示" k="R" />
          </DialogButton>
          <DialogButton className="w-[125px] border-2 border-[#0078d7]" menu>
            <Key text="在以下项中查找" k="I" />
          </DialogButton>
          <DialogButton className="w-[91px] border border-[#adadad]">
            <Key text="查找下一处" k="F" />
          </DialogButton>
          <DialogButton className="w-[74px] border border-[#adadad]">关闭</DialogButton>
        </div>
        <div className="pt-1.5">
          <SectionTitle>搜索选项</SectionTitle>
        </div>
        <div className="flex items-center pt-[9px] pl-[9px]">
          <label htmlFor="search-scope" className="w-9">
            搜索<u>:</u>
          </label>
          <div className="grid h-7 w-[68px] grid-cols-[1fr_17px] border border-[#adadad]">
            <select id="search-scope" className="col-span-2 col-start-1 row-start-1 appearance-none bg-white pl-[3px] outline-none">
              <option>全部</option>
            </select>
            <span className="pointer-events-none col-start-2 row-start-1 flex items-center justify-center border-l border-[#adadad] bg-[#e1e1e1]">
              <Chevron />
            </span>
          </div>
        </div>
        <div className="flex pt-0.5 pl-[9px]">
          <div className="w-[402px]">
            {LEFT_OPTIONS.map((o) => (
              <Option key={o.k} {...o} />
            ))}
          </div>
          <div>
            {RIGHT_OPTIONS.map((o) => (
              <Option key={o.k} {...o} />
            ))}
          </div>
        </div>
        <div className="pt-[68px] pb-2.5">
          <SectionTitle>查找</SectionTitle>
        </div>
        <div className="flex gap-[11px] pl-2.5">
          <DialogButton className="w-[73px] border border-[#adadad]" menu>
            <Key text="格式" k="O" />
          </DialogButton>
          <DialogButton className="w-[92px] border border-[#adadad]" menu>
            <Key text="特殊格式" k="E" />
          </DialogButton>
          <button disabled className="h-7 w-[92px] border border-[#bfbfbf] bg-[#ccc] text-[#a0a0a0] [text-shadow:1px_1px_#fff]">
            <Key text="不限定格式" k="T" />
          </button>
        </div>
      </div>
    </section>
  );
}

/* ---------- status bar ---------- */

function StatusBar() {
  return (
    <footer className="flex h-[23px] items-center border-t border-b border-t-[#c6c6c6] border-b-[#8a8a8a] bg-[#f1f1f1] pl-[5px] text-[#444]">
      <div className="flex items-center gap-[19px] pb-1 whitespace-nowrap">
        <span>页面: 3</span>
        <span>节: 3</span>
        <span>第 3 页，共 10 页</span>
        <span>40/2192 个字</span>
        <span>中文(中国)</span>
        <span>修订: 关闭</span>
        <span>插入</span>
        <button aria-label="宏录制">
          <Svg w={13} h={12}>
            <path d="M5 1.500H12.500V11.500H1.500V5M5 3.500H12M4 6.500H6M8 6.500H10M4 8.500H6M8 8.500H10" stroke="#777" />
            <circle cx="2.500" cy="2.500" r="2.500" fill="#777" />
          </Svg>
        </button>
      </div>
      <div className="ml-auto flex h-full items-center">
        <button aria-label="阅读视图" className="flex w-[38px] justify-center">
          <Svg w={14} h={13}>
            <path d="M.5 .5H6L7 1.500L8 .5H13.500V11.500H8L7 12.500L6 11.500H.5ZM7 1V13M2 3.500H5M2 5.500H5M2 7.500H5M2 9.500H5M9 3.500H12M9 5.500H12M9 7.500H12M9 9.500H12" stroke="#777" />
          </Svg>
        </button>
        <button aria-label="页面视图" className="flex h-full w-[38px] items-center justify-center bg-[#c6c6c6]">
          <Svg w={14} h={13}>
            <path d="M.5 .5H13.500V12.500H.5ZM2 3.500H12M2 5.500H12M2 7.500H12M2 9.500H12" stroke="#666" />
          </Svg>
        </button>
        <button aria-label="Web 版式视图" className="flex w-[38px] justify-center">
          <Svg w={14} h={13}>
            <path d="M11.500 4V.5H.5V11.500H6M2 3.500H10M2 5.500H7M2 7.500H5" stroke="#777" />
            <circle cx="10" cy="9" r="3.500" fill="#888" stroke="#777" />
            <path d="M8 8L10 9L9 11M11 6.500L12 9" stroke="#f1f1f1" />
          </Svg>
        </button>
        <button aria-label="缩小" className="flex w-3.5 justify-center">
          <Svg w={6} h={2}>
            <path d="M0 1H6" stroke="#555" strokeWidth="2" />
          </Svg>
        </button>
        <input
          type="range"
          aria-label="显示比例"
          defaultValue={44}
          className="h-3 w-[102px] appearance-none bg-[linear-gradient(#a0a0a0,#a0a0a0)] bg-[length:100%_1px] bg-center bg-no-repeat [&::-webkit-slider-thumb]:h-[11px] [&::-webkit-slider-thumb]:w-[4px] [&::-webkit-slider-thumb]:appearance-none [&::-webkit-slider-thumb]:bg-[#555]"
        />
        <button aria-label="放大" className="flex w-3 justify-center">
          <Svg w={8} h={8}>
            <path d="M0 4H8M4 0V8" stroke="#555" strokeWidth="2" />
          </Svg>
        </button>
        <span className="w-[52px] pb-0.5 text-center">90%</span>
      </div>
    </footer>
  );
}

/* ---------- overlays ---------- */

function Annotations() {
  return (
    <svg width="600" height="320" viewBox="340 240 600 320" className="pointer-events-none absolute top-[240px] left-[340px]">
      <g className="drop-shadow-[2px_4px_2px_rgba(0,0,0,0.5)]" fill="red">
        <path d="M356 282L438 262" stroke="red" strokeWidth="3" strokeLinecap="round" />
        <path d="M434 257L461 257.500L436 269L439 262Z" />
        <path d="M735 545L896 483" stroke="red" strokeWidth="3" strokeLinecap="round" />
        <path d="M892 477L920 474L898 490L897 483Z" />
      </g>
    </svg>
  );
}

function MouseCursor() {
  return (
    <svg width="13" height="20" viewBox="0 0 13 20" className="pointer-events-none absolute top-[490px] left-[989px]">
      <path d="M.5 .8V16.500L4 13L6.500 19L9 18L6.500 12.200H11.500Z" fill="#fff" stroke="#222" />
    </svg>
  );
}

function Watermark() {
  return (
    <div className="pointer-events-none absolute right-2.5 bottom-2 flex items-center opacity-80">
      <svg width="44" height="42" viewBox="0 0 44 42">
        <defs>
          <linearGradient id="swoosh-top" x1="0" y1="1" x2="1" y2="0">
            <stop offset="0" stopColor="#3a6fb8" />
            <stop offset="1" stopColor="#6cc4ee" />
          </linearGradient>
          <linearGradient id="swoosh-bottom" x1="0" y1="1" x2="1" y2="0">
            <stop offset="0" stopColor="#f2df4a" />
            <stop offset="1" stopColor="#3f9c4c" />
          </linearGradient>
        </defs>
        <path d="M44 1C26 0 4 9 1 23C0 29 4 33 9 33C5 27 8 19 17 12C24 6 33 3 44 1Z" fill="url(#swoosh-top)" />
        <path d="M28 11C19 11 10 18 11 25C13 30 22 29 25 24C27 20 23 17 18 20C23 19 23 24 19 25C15 25 15 20 20 17C25 14 30 15 32 12Z" fill="#4a8fcc" />
        <path d="M30 10C38 16 34 29 5 39C24 44 42 32 41 21C41 15 36 11 30 10Z" fill="url(#swoosh-bottom)" />
      </svg>
      <div className="whitespace-nowrap">
        <div className="text-[21px] leading-7 font-bold text-[#4a8fcc]">极光下载站</div>
        <div className="font-['Liberation_Sans'] text-[16px] leading-4 font-bold text-[#52b36b]">www.xz7.com</div>
      </div>
    </div>
  );
}

export default function App() {
  return (
    <div lang="zh-CN" className={`relative flex h-screen flex-col overflow-hidden text-[12px] leading-4 ${UI_FONT}`}>
      <TitleBar />
      <TabBar />
      <Ribbon />
      <QuickAccess />
      <Workspace />
      <StatusBar />
      <FindDialog />
      <Annotations />
      <MouseCursor />
      <Watermark />
    </div>
  );
}
